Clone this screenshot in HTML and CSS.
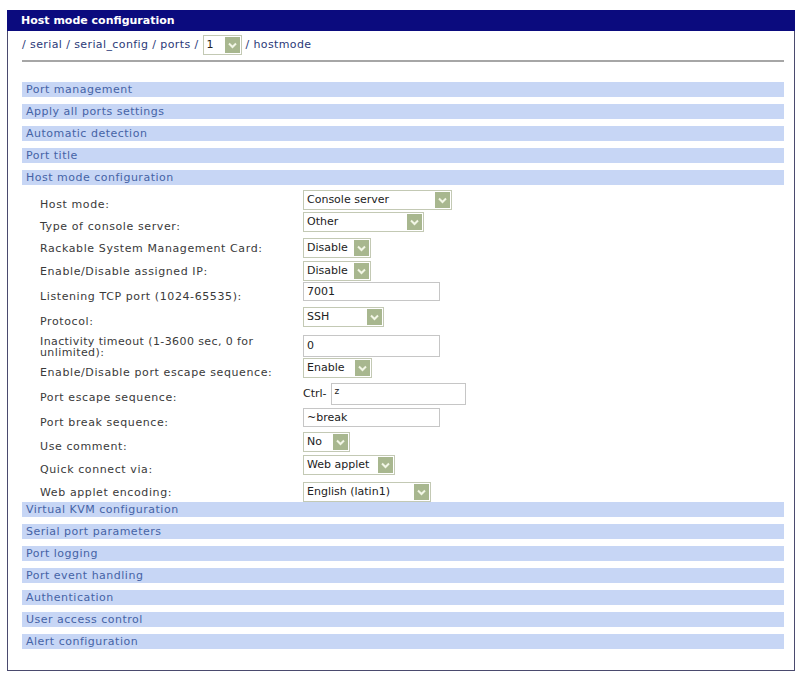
FILE: index.html
```html
<!DOCTYPE html>
<html lang="en">
	<head>
		<meta charset="UTF-8">
		<title>Host mode configuration</title>
		<link rel="stylesheet" href="styles.css">
	</head>
	<body>
		<div class="panel">
			<div class="title">Host mode configuration</div>
			<div class="crumbs">/ serial / serial_config / ports / <span class="select sel-port"><span class="val">1</span><span class="arrow"><svg width="9" height="7" viewBox="0 0 9 7"><polyline points="1,1.5 4.5,5 8,1.5" /></svg></span></span> / hostmode</div>
			<div class="rule"></div>

			<div class="bar">Port management</div>
			<div class="bar">Apply all ports settings</div>
			<div class="bar">Automatic detection</div>
			<div class="bar">Port title</div>
			<div class="bar">Host mode configuration</div>

			<div class="form">
				<div class="lbl">Host mode:</div>
				<div class="ctl"><span class="select w-host"><span class="val">Console server</span><span class="arrow"><svg width="9" height="7" viewBox="0 0 9 7"><polyline points="1,1.5 4.5,5 8,1.5" /></svg></span></span></div>

				<div class="lbl">Type of console server:</div>
				<div class="ctl"><span class="select w-type"><span class="val">Other</span><span class="arrow"><svg width="9" height="7" viewBox="0 0 9 7"><polyline points="1,1.5 4.5,5 8,1.5" /></svg></span></span></div>

				<div class="lbl up">Rackable System Management Card:</div>
				<div class="ctl"><span class="select w-dis"><span class="val">Disable</span><span class="arrow"><svg width="9" height="7" viewBox="0 0 9 7"><polyline points="1,1.5 4.5,5 8,1.5" /></svg></span></span></div>

				<div class="lbl up">Enable/Disable assigned IP:</div>
				<div class="ctl"><span class="select w-dis"><span class="val">Disable</span><span class="arrow"><svg width="9" height="7" viewBox="0 0 9 7"><polyline points="1,1.5 4.5,5 8,1.5" /></svg></span></span></div>

				<div class="lbl">Listening TCP port (1024-65535):</div>
				<div class="ctl"><span class="text w-text">7001</span></div>

				<div class="lbl">Protocol:</div>
				<div class="ctl"><span class="select w-ssh"><span class="val">SSH</span><span class="arrow"><svg width="9" height="7" viewBox="0 0 9 7"><polyline points="1,1.5 4.5,5 8,1.5" /></svg></span></span></div>

				<div class="lbl two">Inactivity timeout (1-3600 sec, 0 for unlimited):</div>
				<div class="ctl"><span class="text w-text tall">0</span></div>

				<div class="lbl">Enable/Disable port escape sequence:</div>
				<div class="ctl"><span class="select w-en"><span class="val">Enable</span><span class="arrow"><svg width="9" height="7" viewBox="0 0 9 7"><polyline points="1,1.5 4.5,5 8,1.5" /></svg></span></span></div>

				<div class="lbl">Port escape sequence:</div>
				<div class="ctl"><span class="ctrl">Ctrl-</span><span class="text w-ctrl small">z</span></div>

				<div class="lbl">Port break sequence:</div>
				<div class="ctl"><span class="text w-text">~break</span></div>

				<div class="lbl">Use comment:</div>
				<div class="ctl"><span class="select w-no"><span class="val">No</span><span class="arrow"><svg width="9" height="7" viewBox="0 0 9 7"><polyline points="1,1.5 4.5,5 8,1.5" /></svg></span></span></div>

				<div class="lbl">Quick connect via:</div>
				<div class="ctl"><span class="select w-web"><span class="val">Web applet</span><span class="arrow"><svg width="9" height="7" viewBox="0 0 9 7"><polyline points="1,1.5 4.5,5 8,1.5" /></svg></span></span></div>

				<div class="lbl up">Web applet encoding:</div>
				<div class="ctl"><span class="select w-enc"><span class="val">English (latin1)</span><span class="arrow"><svg width="9" height="7" viewBox="0 0 9 7"><polyline points="1,1.5 4.5,5 8,1.5" /></svg></span></span></div>
			</div>

			<div class="bar">Virtual KVM configuration</div>
			<div class="bar">Serial port parameters</div>
			<div class="bar">Port logging</div>
			<div class="bar">Port event handling</div>
			<div class="bar">Authentication</div>
			<div class="bar">User access control</div>
			<div class="bar">Alert configuration</div>
		</div>
	</body>
</html>
```

FILE: styles.css
```css
body {
	margin: 10px 0 0 7px;
	background: #fff;
	font-family: "DejaVu Sans", Verdana, sans-serif;
	font-size: 11px;
	color: #3a3a3a;
}
.panel {
	box-sizing: border-box;
	width: 788px;
	height: 661px;
	border: 1px solid #4a4a6e;
	border-top: 0;
	padding: 0 10px 0 14px;
	display: flex;
	flex-direction: column;
}
.title {
	margin: 0 -11px 0 -15px;
	height: 21px;
	line-height: 21px;
	padding-left: 14px;
	background: #0b0b7e;
	color: #fff;
	font-weight: bold;
	font-size: 11px;
}
.crumbs {
	height: 22px;
	line-height: 22px;
	margin-top: 3px;
	color: #2b3a78;
	font-size: 11px;
	letter-spacing: 0.4px;
	white-space: nowrap;
}
.crumbs .select {
	vertical-align: middle;
	letter-spacing: 0;
}
.rule {
	height: 2px;
	margin-top: 4px;
	background: #a6a6a6;
	margin-bottom: 20px;
}
.bar {
	height: 15px;
	line-height: 15px;
	padding-left: 4px;
	margin-bottom: 7px;
	background: #c7d6f5;
	color: #4563a6;
	letter-spacing: 0.5px;
}
/* row heights follow the original form's uneven spacing */
.form {
	display: grid;
	grid-template-columns: 263px auto;
	grid-template-rows: 22px 26px 23px 21px 25px 28px 23px 25px 25px 24px 23px 27px 20px;
	padding: 5px 0 0 18px;
	margin: -7px 0 0;
}
.lbl {
	height: 21px;
	display: flex;
	align-items: flex-end;
	color: #3a3a3a;
	letter-spacing: 0.6px;
}
.lbl.up {
	height: 17px;
}
.lbl.two {
	height: auto;
	margin-top: -5px;
	line-height: 11px;
	letter-spacing: 0.4px;
}
.ctl {
	display: flex;
	align-items: flex-start;
}
.select {
	box-sizing: border-box;
	height: 20px;
	display: inline-flex;
	align-items: stretch;
	border: 1px solid #c3c9b4;
	background: #fff;
	color: #222;
}
.select .val {
	flex: 1;
	padding-left: 3px;
	line-height: 18px;
	overflow: hidden;
	white-space: nowrap;
}
.select .arrow {
	width: 15px;
	margin: 1px;
	background: #a8b78f;
	display: flex;
	align-items: center;
	justify-content: center;
}
.arrow polyline {
	fill: none;
	stroke: #f2f6e6;
	stroke-width: 2;
}
.text {
	box-sizing: border-box;
	height: 19px;
	line-height: 17px;
	padding-left: 3px;
	border: 1px solid #c6c6c6;
	background: #fff;
	color: #222;
}
.text.tall {
	height: 22px;
	line-height: 20px;
}
.text.small {
	font-size: 9px;
	line-height: 14px;
}
.ctrl {
	margin-right: 4px;
	line-height: 22px;
	color: #222;
}
.sel-port { width: 39px; }
.w-host { width: 149px; }
.w-type { width: 121px; }
.w-dis { width: 68px; }
.w-ssh { width: 81px; }
.w-en { width: 69px; }
.w-no { width: 47px; }
.w-web { width: 92px; }
.w-enc { width: 128px; }
.w-text { width: 137px; }
.w-ctrl { width: 135px; height: 22px; }
```
